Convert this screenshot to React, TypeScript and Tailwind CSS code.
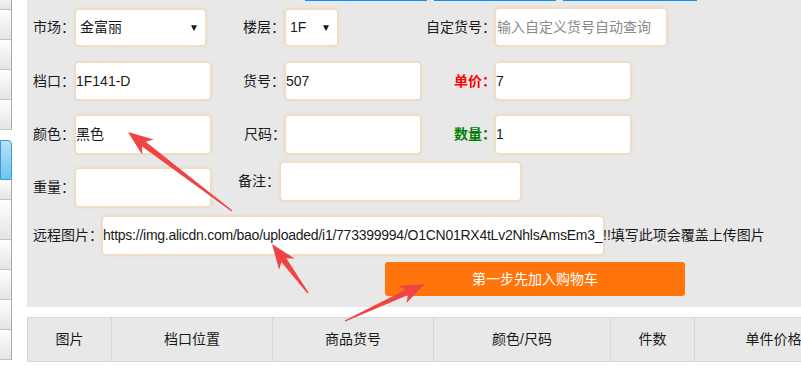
import React from "react";

const FONT = "font-['Liberation_Sans','Noto_Sans_CJK_SC',sans-serif]";

const box =
  "bg-white rounded-[3px] shadow-[0_0_0_1px_#f1dcbb,0_0_4px_#ebc58e] flex items-center overflow-hidden";

function Arrow({ t, p }: { t: [number, number]; p: [number, number] }) {
  const dx = p[0] - t[0];
  const dy = p[1] - t[1];
  const L = Math.hypot(dx, dy);
  const ux = dx / L;
  const uy = dy / L;
  const nx = -uy;
  const ny = ux;
  const hl = 25;
  const hw = 9.5;
  const sw = 3;
  const bx = p[0] - ux * hl;
  const by = p[1] - uy * hl;
  const b2x = p[0] - ux * (hl - 5);
  const b2y = p[1] - uy * (hl - 5);
  const pts = [
    [t[0] + nx * 0.6, t[1] + ny * 0.6],
    [b2x + nx * sw, b2y + ny * sw],
    [bx + nx * hw, by + ny * hw],
    [p[0], p[1]],
    [bx - nx * hw, by - ny * hw],
    [b2x - nx * sw, b2y - ny * sw],
    [t[0] - nx * 0.6, t[1] - ny * 0.6],
  ]
    .map((q) => `${q[0].toFixed(1)},${q[1].toFixed(1)}`)
    .join(" ");
  return <polygon points={pts} fill="#f04343" />;
}

function Sidebar() {
  const seg = "h-[30px] border-b border-[#c4c4c4] bg-gradient-to-b from-white to-[#e4e4e4]";
  return (
    <div className="w-[12px] h-full flex flex-col shrink-0">
      <div className="border-r border-[#a9a9a9] flex flex-col">
        <div className="h-[10px] border-b border-[#c4c4c4] bg-gradient-to-b from-[#f2f2f2] to-[#e4e4e4]" />
        <div className={seg} />
        <div className={seg} />
        <div className={seg} />
        <div className={seg} />
      </div>
      <div className="h-[10px]" />
      <div className="h-[40px] rounded-tr-[4px] border border-[#3c98d6] bg-gradient-to-b from-[#b6e2fb] to-[#6fc2ef]" />
      <div className="border-r border-[#a9a9a9] flex flex-col">
        <div className="h-[20px] border-b border-[#c4c4c4] bg-gradient-to-b from-white to-[#e4e4e4]" />
        <div className="h-[40px] border-b border-[#c4c4c4] bg-gradient-to-b from-white to-[#e4e4e4]" />
        <div className={seg} />
        <div className={seg} />
        <div className={seg} />
        <div className={seg} />
      </div>
    </div>
  );
}

function Label({ w, children, cls = "" }: { w: string; children: React.ReactNode; cls?: string }) {
  return <div className={`${w} shrink-0 whitespace-nowrap ${cls}`}>{children}</div>;
}

export default function App() {
  return (
    <div className={`relative w-[801px] h-[365px] overflow-hidden bg-white flex text-[14px] text-[#1a1a1a] ${FONT}`}>
      <Sidebar />
      <div className="ml-[15px] flex-1 flex flex-col min-w-0">
        <div className="h-[307px] bg-[#e8e8e8] flex flex-col">
          <div className="h-px flex shrink-0">
            <div className="ml-[278px] w-[122px] bg-[#0b8ff0]" />
            <div className="ml-[7px] w-[122px] bg-[#0b8ff0]" />
            <div className="ml-[7px] w-[134px] bg-[#0b8ff0]" />
          </div>

          {/* Row 1 */}
          <div className="mt-[8px] pl-[6px] flex items-center h-[36px]">
            <div className="w-[210px] flex items-center">
              <Label w="w-[43px]">市场：</Label>
              <div className={`${box} w-[129px] h-[35px] justify-between pl-[4px] pr-[6px]`}>
                <span>金富丽</span>
                <span className="text-[10px]">▼</span>
              </div>
            </div>
            <div className="w-[183px] flex items-center">
              <Label w="w-[43px]">楼层：</Label>
              <div className={`${box} w-[51px] h-[35px] justify-between pl-[4px] pr-[6px]`}>
                <span>1F</span>
                <span className="text-[10px]">▼</span>
              </div>
            </div>
            <div className="flex items-center">
              <Label w="w-[70px]" cls="text-right">自定货号：</Label>
              <div className={`${box} w-[170px] h-[36px] pl-px text-[#8a8a8a] whitespace-nowrap`}>
                输入自定义货号自动查询
              </div>
            </div>
          </div>

          {/* Row 2 */}
          <div className="mt-[18px] pl-[6px] flex items-center h-[36px]">
            <div className="w-[210px] flex items-center">
              <Label w="w-[43px]">档口：</Label>
              <div className={`${box} w-[134px] h-[36px]`}>1F141-D</div>
            </div>
            <div className="w-[183px] flex items-center">
              <Label w="w-[43px]">货号：</Label>
              <div className={`${box} w-[134px] h-[36px]`}>507</div>
            </div>
            <div className="flex items-center">
              <Label w="w-[70px]" cls="text-right font-bold text-[#ff0000]">单价：</Label>
              <div className={`${box} w-[134px] h-[36px]`}>7</div>
            </div>
          </div>

          {/* Row 3 */}
          <div className="mt-[17px] pl-[6px] flex items-center h-[37px]">
            <div className="w-[210px] flex items-center">
              <Label w="w-[43px]">颜色：</Label>
              <div className={`${box} w-[134px] h-[37px]`}>黑色</div>
            </div>
            <div className="w-[183px] flex items-center">
              <Label w="w-[43px]" cls="pl-px">尺码：</Label>
              <div className={`${box} w-[134px] h-[37px]`} />
            </div>
            <div className="flex items-center">
              <Label w="w-[70px]" cls="text-right font-bold text-[#008000]">数量：</Label>
              <div className={`${box} w-[134px] h-[37px]`}>1</div>
            </div>
          </div>

          {/* Row 4 */}
          <div className="mt-[10px] pl-[6px] flex items-start h-[43px]">
            <div className="w-[205px] mt-[6px] flex items-center">
              <Label w="w-[43px]">重量：</Label>
              <div className={`${box} w-[134px] h-[37px]`} />
            </div>
            <div className="flex items-center">
              <Label w="w-[43px]">备注：</Label>
              <div className={`${box} w-[239px] h-[37px]`} />
            </div>
          </div>

          {/* Row 5 */}
          <div className="mt-[11px] pl-[6px] flex items-center h-[37px]">
            <Label w="w-[70px]">远程图片：</Label>
            <div className={`${box} w-[500px] h-[37px] whitespace-nowrap tracking-[-0.25px]`}>
              https://img.alicdn.com/bao/uploaded/i1/773399994/O1CN01RX4tLv2NhlsAmsEm3_
            </div>
            <span className="whitespace-nowrap">!!填写此项会覆盖上传图片</span>
          </div>

          {/* Button */}
          <div className="mt-[8px] pl-[6px] flex">
            <div className="ml-[352px] w-[300px] h-[34px] rounded-[3px] bg-[#ff750c] text-white flex items-center justify-center">
              第一步先加入购物车
            </div>
          </div>
        </div>

        {/* Table header */}
        <div className="mt-[10px] flex h-[45px] w-[900px] border-y border-l border-[#d6d6d6] bg-[#e8e8e8] shrink-0">
          {[
            ["图片", "w-[84px]"],
            ["档口位置", "w-[161px]"],
            ["商品货号", "w-[161px]"],
            ["颜色/尺码", "w-[177px]"],
            ["件数", "w-[84px]"],
            ["单件价格", "w-[158px]"],
            ["", "w-[120px]"],
          ].map(([t, w], i) => (
            <div
              key={i}
              className={`${w} shrink-0 flex items-center justify-center border-r border-[#d6d6d6]`}
            >
              {t}
            </div>
          ))}
        </div>
      </div>

      <svg className="absolute inset-0 pointer-events-none" width="801" height="365" viewBox="0 0 801 365">
        <Arrow t={[232, 211]} p={[128, 132]} />
        <Arrow t={[308, 293]} p={[272, 244]} />
        <Arrow t={[345, 321]} p={[425, 284]} />
      </svg>
    </div>
  );
}
